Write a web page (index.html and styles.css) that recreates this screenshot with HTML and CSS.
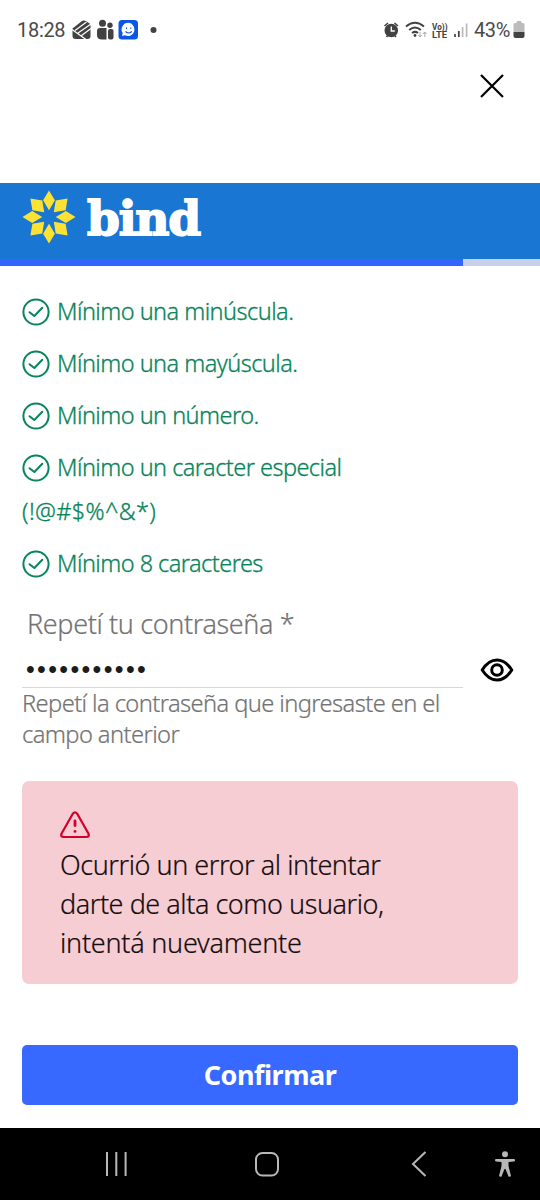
FILE: index.html
```
<!DOCTYPE html>
<html lang="es">

<head>
    <meta charset="utf-8">
    <title>Bind</title>
    <link rel="stylesheet" href="styles.css">
</head>

<body>
    <div class="status">
        <span class="hora">18:28</span>
        <svg class="notificaciones" width="90" height="24" viewBox="0 0 90 24">
            <g fill="#424242">
                <path d="M.5 10.500 10 3Q11.500 2 14 3L17.500 5.500Q18.500 6.500 18.500 8V18Q18.500 21 15.500 21H3.500Q.5 21 .5 18Z" />
                <circle cx="30.500" cy="5.200" r="3.500" />
                <path d="M25 13Q25 10 28 10H34.500V21.500H30Q25 21.500 25 17Z" />
                <circle cx="38" cy="7.200" r="2.700" />
                <rect x="36" y="11" width="5.500" height="10.500" rx="2" />
            </g>
            <path d="M3 12.500 14.500 4M6 15 19 6M0 11.500 14 21.500M9.500 17.500 19 10.500" stroke="#fff" stroke-width="1.200" fill="none" />
            <rect x="46.500" y="2" width="19.500" height="19.500" rx="3.500" fill="#0b57e3" />
            <path d="M56.500 4.800a6.600 6.600 0 1 1-3.500 12.500L50 18l.7-3A6.600 6.600 0 0 1 56.500 4.800Z" fill="#fff" />
            <path d="M54.500 9.500v1.500M58.800 9.500v1.500M53.500 13.500q3 3 6.300 0" stroke="#0b57e3" stroke-width="1.100" fill="none" />
            <circle cx="81.500" cy="12" r="3" fill="#424242" />
        </svg>
        <svg class="senal" width="92" height="24" viewBox="0 0 92 24">
            <g stroke="#424242" fill="none" stroke-width="1.600">
                <circle cx="8.300" cy="12.500" r="6" fill="#424242" />
                <path d="M1.500 8 5 5M15 8 11.500 5M3.500 19l1.200-1.500M13 19l-1.200-1.500" />
                <path d="M8.300 8.500V13h3.500" stroke="#fff" stroke-width="1.400" />
                <path d="M23 8.500q9-7.500 18 0M26.200 12q5.800-5 11.600 0M29 15q3-2.300 6 0" stroke-width="2" />
                <circle cx="32" cy="17.500" r="1.400" fill="#424242" stroke="none" />
                <path d="M37 14v5m-1.800-2L37 19l1.800-2M41.800 19v-5m-1.800 2 1.800-2 1.800 2" stroke="#aaa" stroke-width="1" />
            </g>
            <text x="49" y="11.500" class="volte" textLength="15.500" lengthAdjust="spacingAndGlyphs">Vo))</text>
            <text x="49" y="20" class="volte" textLength="15" lengthAdjust="spacingAndGlyphs">LTE</text>
            <path d="M72 19v-3M75.800 19v-6" stroke="#424242" stroke-width="1.700" />
            <path d="M79.600 19V9M83.600 19V5.500" stroke="#bbb" stroke-width="1.700" />
        </svg>
        <span class="carga">43%</span>
        <svg width="12" height="18" viewBox="0 0 12 18">
            <path d="M3.500 2V1Q3.500 0 4.500 0h3Q8.500 0 8.500 1v1H10q1.500 0 1.500 1.500V11H.5V3.500Q.5 2 2 2Z" fill="#bcbcbc" />
            <path d="M.5 11h11v4q0 2-2 2h-7q-2 0-2-2Z" fill="#424242" />
        </svg>
    </div>

    <div class="cerrar">
        <svg width="26" height="26" viewBox="0 0 26 26">
            <path d="M2 2 24 24M24 2 2 24" stroke="#000" stroke-width="2.200" />
        </svg>
    </div>

    <header class="marca">
        <svg width="54" height="54" viewBox="-27 -27 54 54" fill="#fde233">
            <defs>
                <path id="recto" d="M0-26.500 5.900-16.800 0-6.800-5.900-16.800Z" />
                <path id="diagonal" d="M0-26.300 7-16.500 0-6.800-7-16.500Z" />
            </defs>
            <use href="#recto" />
            <use href="#recto" transform="rotate(90)" />
            <use href="#recto" transform="rotate(180)" />
            <use href="#recto" transform="rotate(270)" />
            <use href="#diagonal" transform="rotate(45)" />
            <use href="#diagonal" transform="rotate(135)" />
            <use href="#diagonal" transform="rotate(225)" />
            <use href="#diagonal" transform="rotate(315)" />
        </svg>
        <span class="nombre">bind</span>
    </header>
    <div class="progreso"><div class="avance"></div></div>

    <svg class="oculto" width="0" height="0">
        <symbol id="ok" viewBox="0 0 28 28">
            <circle cx="14" cy="14" r="12.600" />
            <path d="M7.500 14.200 12.300 18 20.300 9.700" />
        </symbol>
    </svg>

    <main>
        <ul class="reglas">
            <li><svg class="ok"><use href="#ok" /></svg>Mínimo una minúscula.</li>
            <li><svg class="ok"><use href="#ok" /></svg>Mínimo una mayúscula.</li>
            <li><svg class="ok"><use href="#ok" /></svg>Mínimo un número.</li>
            <li><svg class="ok"><use href="#ok" /></svg>Mínimo un caracter especial<br><span class="simbolos">(!@#$%^&amp;*)</span></li>
            <li><svg class="ok"><use href="#ok" /></svg>Mínimo 8 caracteres</li>
        </ul>

        <div class="campo">
            <div class="entrada">
                <div class="etiqueta">Repetí tu contraseña *</div>
                <div class="clave">•••••••••••</div>
            </div>
            <svg class="ojo" width="34" height="26" viewBox="0 0 34 26" fill="none" stroke="#000" stroke-width="3">
                <path d="M2.200 13Q8.500 3 17 3t14.800 10Q25.500 23 17 23T2.200 13Z" stroke-linejoin="round" />
                <circle cx="17" cy="13" r="5.300" />
            </svg>
        </div>
        <p class="ayuda">Repetí la contraseña que ingresaste en el<br>campo anterior</p>

        <div class="error">
            <svg width="30" height="28" viewBox="0 0 30 28" fill="none" stroke="#d50029" stroke-width="2.200" stroke-linecap="round">
                <path d="M12.800 2.700 1.600 22.500Q.2 26 3.800 26H26.200Q29.800 26 28.400 22.500L17.200 2.700Q15 .2 12.800 2.700Z" />
                <path d="M15 10v4.500" stroke-width="2.800" />
                <path d="M15 20.300v.1" stroke-width="2.800" />
            </svg>
            <p>Ocurrió un error al intentar<br>darte de alta como usuario,<br><span class="ultima">intentá nuevamente</span></p>
        </div>

        <button class="confirmar">Confirmar</button>
    </main>

    <nav class="navegacion">
        <svg width="22" height="26" viewBox="0 0 22 26"><path d="M2 1v24M11.300 1v24M20.600 1v24" /></svg>
        <svg width="26" height="26" viewBox="0 0 26 26"><rect x="2" y="2" width="22" height="22.500" rx="6.500" /></svg>
        <svg width="16" height="26" viewBox="0 0 16 26"><path d="M14.500 1 2 13 14.500 25" /></svg>
        <svg class="persona" width="22" height="26" viewBox="0 0 22 26">
            <circle cx="11" cy="3.300" r="3" />
            <path d="M2 8H20Q21 8 21 9.200T20 10.500L14.500 11V15L17 25Q16 26.300 14.500 25.500L11.500 18H10.500L7.500 25.500Q6 26.300 5 25L7.500 15V11L2 10.500Q1 10.300 1 9.200T2 8Z" />
        </svg>
    </nav>
</body>

</html>
```
FILE: styles.css
```
* {
    box-sizing: border-box;
}

body {
    margin: 0;
    width: 540px;
    height: 1200px;
    overflow: hidden;
    background-color: #fff;
    font-family: "Noto Sans", sans-serif;
    font-weight: 300;
    display: flex;
    flex-direction: column;
}

svg {
    display: block;
    flex: none;
}

.oculto {
    display: none;
}

.status {
    height: 60px;
    display: flex;
    align-items: center;
    padding: 0 15px 0 17px;
    font-family: Roboto, sans-serif;
    font-weight: 400;
    color: #4a4a4a;
}

.hora {
    width: 55px;
    font-size: 20px;
    letter-spacing: -0.3px;
}

.senal {
    margin-left: auto;
    margin-right: -1px;
}

.volte {
    font: bold 9px Roboto, sans-serif;
    fill: #424242;
}

.carga {
    width: 39px;
    font-size: 20px;
    letter-spacing: -0.4px;
}

.cerrar {
    height: 123px;
    padding: 13px 35px 0 0;
    display: flex;
    justify-content: flex-end;
}

.marca {
    height: 76px;
    background-color: #1976d2;
    display: flex;
    align-items: flex-start;
    padding: 7px 22px 0;
}

.nombre {
    margin-left: 11px;
    font: bold 47px/57px "DejaVu Serif", serif;
    letter-spacing: -1.2px;
    color: #fff;
    -webkit-text-stroke: 1.8px #fff;
}

.progreso {
    height: 7px;
    background-color: #c8cfea;
}

.avance {
    width: 463px;
    height: 7px;
    background-color: #3366ff;
}

main {
    height: 862px;
    padding: 23px 22px 0;
}

.reglas {
    margin: 0;
    padding: 0;
    height: 305px;
    list-style: none;
    color: #08855a;
    font-size: 23.5px;
    line-height: 44px;
    letter-spacing: -0.54px;
    -webkit-text-stroke: 0.3px #08855a;
}

.reglas li {
    height: 44px;
    margin-bottom: 8px;
}

.reglas li:nth-child(4) {
    height: 88px;
}

.simbolos {
    letter-spacing: 0.35px;
}

.ok {
    display: inline-block;
    width: 28px;
    height: 28px;
    margin-right: 7px;
    vertical-align: -6px;
    fill: none;
    stroke: #08855a;
    stroke-width: 2;
    stroke-linecap: round;
    stroke-linejoin: round;
}

.campo {
    height: 94px;
    display: flex;
    justify-content: space-between;
}

.entrada {
    width: 441px;
    border-bottom: 1px solid #d8d8d8;
}

.etiqueta {
    padding: 10px 0 0 5px;
    font-size: 27px;
    line-height: 40px;
    letter-spacing: -0.38px;
    color: #737373;
    -webkit-text-stroke: 0.2px #737373;
}

.clave {
    padding: 7px 0 0 4px;
    height: 43px;
    font: 25px/36px "Liberation Sans", sans-serif;
    letter-spacing: 2.35px;
    color: #1c1c1c;
}

.ojo {
    margin: 63px 4px 0 0;
}

.ayuda {
    margin: 0;
    height: 93px;
    font-size: 23.7px;
    line-height: 31px;
    letter-spacing: -0.6px;
    color: #737373;
    -webkit-text-stroke: 0.2px #737373;
}

.error {
    height: 203px;
    padding: 30px 38px 0;
    border-radius: 7px;
    background-color: #f5cdd3;
    color: #150c0e;
}

.error p {
    margin: 6px 0 0;
    font-size: 27px;
    line-height: 39px;
    letter-spacing: -0.46px;
    -webkit-text-stroke: 0.2px #150c0e;
}

.error .ultima {
    letter-spacing: -0.25px;
}

.confirmar {
    display: block;
    width: 496px;
    height: 60px;
    margin-top: 61px;
    padding: 0 0 2px;
    border: none;
    border-radius: 5px;
    background-color: #3768ff;
    color: #fff;
    font: bold 27px "Noto Sans", sans-serif;
    letter-spacing: -0.5px;
}

.navegacion {
    height: 72px;
    display: flex;
    align-items: center;
    padding: 0 24px 0 105px;
    background-color: #000;
    fill: none;
    stroke: #b8b8b8;
    stroke-width: 2;
}

.navegacion svg:nth-child(2) {
    margin-left: 127px;
}

.navegacion svg:nth-child(3) {
    margin-left: 131px;
}

.navegacion .persona {
    margin-left: auto;
    fill: #b8b8b8;
    stroke: none;
}
```
